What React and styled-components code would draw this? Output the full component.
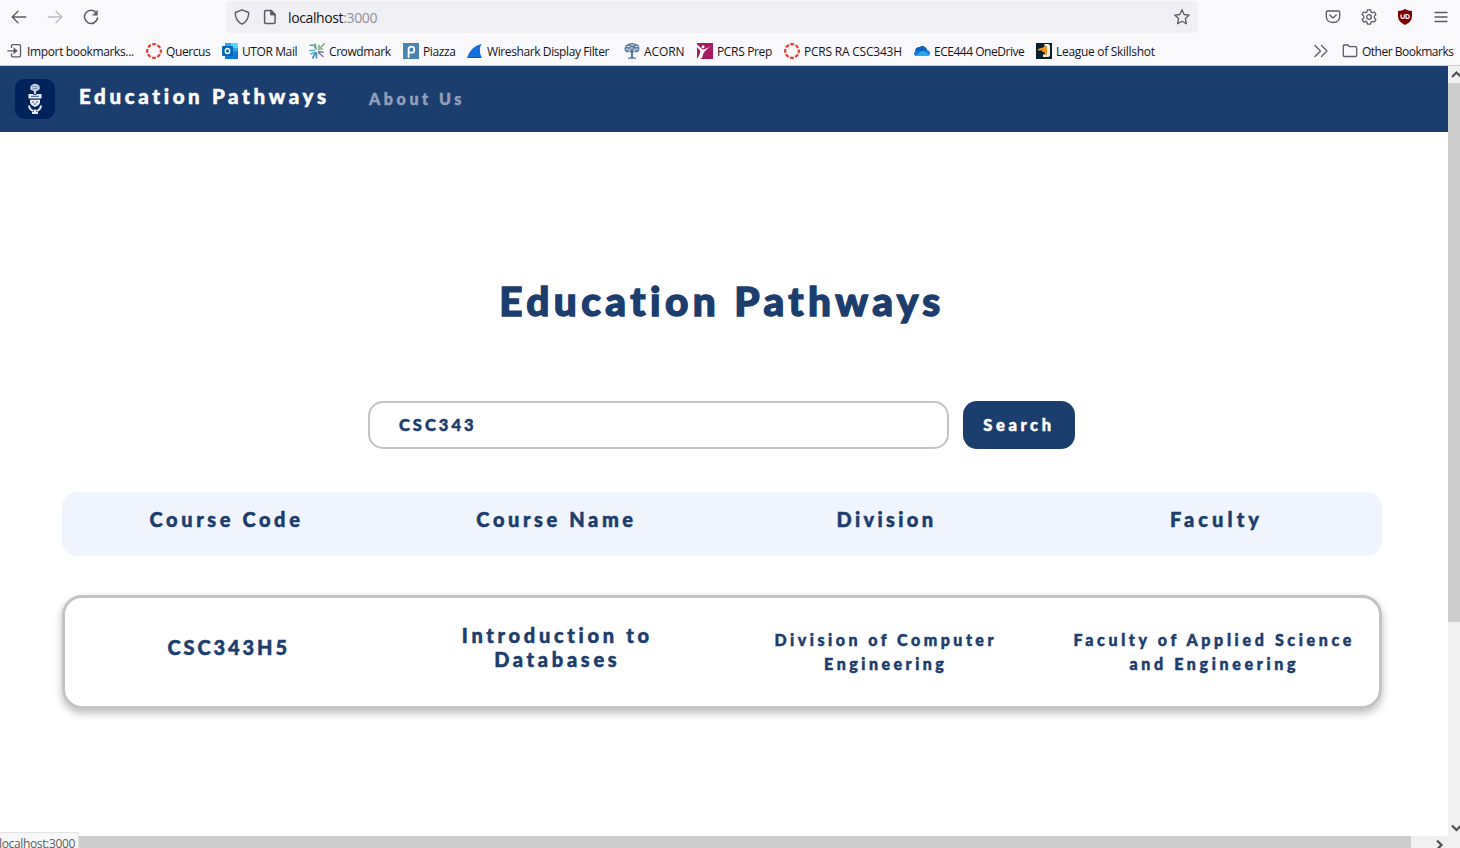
import React from "react";
import styled, { createGlobalStyle } from "styled-components";

const GlobalStyle = createGlobalStyle`
  * { box-sizing: border-box; }
  html, body { margin: 0; padding: 0; overflow: hidden; background: #fff; }
`;

const navy = "#1c3e6e";
const rounded = `"Lato", "Open Sans", sans-serif`;
const system = `"Open Sans", "Noto Sans", sans-serif`;

const Window = styled.div`
  width: 1460px;
  height: 848px;
  display: flex;
  flex-direction: column;
  overflow: hidden;
  position: relative;
`;

const Chrome = styled.header`
  height: 66px;
  flex: none;
  background: #f9f9fb;
  border-bottom: 1px solid #cccccf;
  font-family: ${system};
  color: #15141a;
`;

const Toolbar = styled.div`
  height: 34px;
  display: flex;
  align-items: center;
  padding: 0 11px 0 11px;
`;

const NavButtons = styled.div`
  display: flex;
  gap: 20px;
  width: 215px;
`;

const AddressBar = styled.div`
  width: 972px;
  height: 32px;
  border-radius: 4px;
  background: #f0f0f4;
  display: flex;
  align-items: center;
  padding: 0 8px;
  gap: 12px;
`;

const Address = styled.span`
  flex: 1;
  font-size: 14px;
  letter-spacing: -0.38px;
  margin: 1px 0 0 -2px;
  span { color: #8f8f9d; }
`;

const Tools = styled.div`
  flex: 1;
  display: flex;
  justify-content: flex-end;
  gap: 20px;
`;

const Bookmarks = styled.div`
  height: 31px;
  display: flex;
  align-items: center;
  padding: 3px 6px 0 7px;
`;

const Bookmark = styled.div`
  width: ${(p) => p.$width}px;
  flex: none;
  display: flex;
  align-items: center;
  gap: 4px;
  white-space: nowrap;
  font-size: 12px;
  letter-spacing: ${(p) => p.$spacing || -0.35}px;
  svg { flex: none; }
`;

const Overflow = styled.div`
  flex: 1;
  display: flex;
  justify-content: flex-end;
  padding-right: 13px;
`;

const Viewport = styled.div`
  flex: 1;
  min-height: 0;
  display: grid;
  grid-template-columns: 1448px 12px;
  grid-template-rows: 770px 12px;
`;

const Page = styled.main`
  overflow: hidden;
  background: #fff;
  font-family: ${rounded};
  font-weight: 900;
  color: ${navy};
  -webkit-text-stroke: 0.5px currentColor;
`;

const Navbar = styled.nav`
  height: 66px;
  background: ${navy};
  display: flex;
  align-items: center;
  padding-left: 15px;
`;

const Crest = styled.div`
  width: 40px;
  height: 40px;
  border-radius: 9px;
  background: #00235c;
  display: flex;
  align-items: center;
  justify-content: center;
`;

const Brand = styled.a`
  width: 290px;
  margin-left: 24px;
  padding-bottom: 6px;
  color: #fff;
  font-size: 20.5px;
  letter-spacing: 3.65px;
  white-space: nowrap;
`;

const NavLink = styled.a`
  color: #929fb6;
  font-size: 16px;
  letter-spacing: 3.6px;
  padding-bottom: 2px;
`;

const Title = styled.h1`
  margin: 139px 0 0;
  height: 60px;
  line-height: 60px;
  padding-right: 4px;
  text-align: center;
  font-size: 40.5px;
  font-weight: 900;
  letter-spacing: 4.45px;
  -webkit-text-stroke-width: 1.4px;
`;

const SearchForm = styled.div`
  display: flex;
  gap: 14px;
  margin: 70px 0 0 368px;
`;

const SearchInput = styled.input`
  width: 581px;
  height: 48px;
  border: 2px solid #c3c3c3;
  border-radius: 15px;
  padding: 0 29px;
  outline: 0;
  color: ${navy};
  font: 900 16.5px ${rounded};
  letter-spacing: 3px;
  -webkit-text-stroke: 0.5px currentColor;
`;

const SearchButton = styled.button`
  width: 112px;
  height: 48px;
  border: 0;
  border-radius: 14px;
  background: ${navy};
  color: #fff;
  font: 900 16.5px ${rounded};
  letter-spacing: 3.6px;
  padding: 0;
  -webkit-text-stroke: 0.5px currentColor;
`;

const TableHead = styled.div`
  width: 1320px;
  height: 64px;
  margin: 43px 0 0 62px;
  padding-top: 15px;
  border-radius: 15px;
  background: #f0f5fd;
  display: grid;
  grid-template-columns: repeat(4, 330px);
`;

const ResultCard = styled.div`
  width: 1320px;
  height: 114px;
  margin: 39px 0 0 62px;
  border: 3px solid #c3c3c3;
  border-radius: 20px;
  box-shadow: 0 4px 9px rgba(0, 0, 0, 0.27);
  display: grid;
  grid-template-columns: repeat(4, 1fr);
  align-items: center;
  padding-bottom: 8px;
`;

const Cell = styled.div`
  text-align: center;
  font-size: ${(p) => (p.$small ? 16 : 20)}px;
  line-height: 24px;
  letter-spacing: ${(p) => p.$spacing}px;
  padding: ${(p) => (p.$small ? "8px 1px 0 0" : "0 1px 2px 0")};
  white-space: pre;
`;

const VerticalBar = styled.div`
  background: #f0f0f0;
  display: flex;
  flex-direction: column;
  justify-content: space-between;
  overflow: hidden;
  svg { flex: none; }
`;

const VerticalThumb = styled.div`
  height: 539px;
  margin-bottom: auto;
  background: #cdcdcd;
`;

const HorizontalBar = styled.div`
  grid-column: 1 / 3;
  background: #f0f0f0;
  display: flex;
  justify-content: space-between;
  overflow: hidden;
`;

const HorizontalThumb = styled.div`
  width: 1411px;
  background: #cdcdcd;
`;

const Status = styled.div`
  position: absolute;
  left: -1px;
  bottom: 0;
  width: 80px;
  height: 16px;
  border: 1px solid #e3e3e3;
  border-bottom: 0;
  background: #f7f7f7;
  color: #5b5b60;
  font: 12px/21px ${system};
  letter-spacing: -0.35px;
  overflow: hidden;
  white-space: nowrap;
  text-indent: -1px;
`;

const Svg = ({ size = 16, children, color = "#5b5b66", width = 1.3 }) => (
  <svg width={size} height={size} viewBox="0 0 16 16" fill="none" stroke={color} strokeWidth={width} strokeLinecap="round" strokeLinejoin="round">
    {children}
  </svg>
);

const Ring = () => (
  <Svg color="#e03b2f" width={0}>
    <circle cx="8" cy="8" r="6.8" strokeWidth="2.2" strokeLinecap="butt" strokeDasharray="3.74 1.6" strokeDashoffset="1.87" />
  </Svg>
);

const icons = {
  import: <Svg><path d="M4.5 4.5V3q0-1.3 1.3-1.3h6.4q1.3 0 1.3 1.3v9.5q0 1.3-1.3 1.3H5.8q-1.3 0-1.3-1.3V11M.7 7.8h8" /><path d="M7 5l3.4 2.8L7 10.6z" fill="#5b5b66" strokeWidth=".6" /></Svg>,
  ring: <Ring />,
  outlook: <Svg width={0}><path d="M3 0h13v8H3z" fill="#28a8ea" /><path d="M9 0h7v5H9z" fill="#50d9ff" /><path d="M3 8h13v8H3z" fill="#1490df" /><path d="M3 8l7 4 6-4v8H3z" fill="#0f78d4" /><rect y="3" width="11" height="10" rx="1" fill="#0364b8" /><ellipse cx="5.5" cy="8" rx="2.2" ry="2.5" stroke="#fff" strokeWidth="1.4" /></Svg>,
  crowdmark: <Svg width={1.6}><path d="M9.5 6.5L15.5.7M10 6V2.4M10 6h3.5" stroke="#87b784" /><path d="M1 2.3h4L7 6M6 1l1 4" stroke="#65a59a" /><path d="M.8 7.5h5M5.5 9.5L2 11" stroke="#54b5c5" /><path d="M6.5 10l-2.8 5M7.5 10v5" stroke="#4d8dbd" /><path d="M9.5 9.5l4.5 4M9.8 8.5l4.2.8" stroke="#8b7196" /></Svg>,
  piazza: <Svg width={0}><path d="M0 0h16v16H0z" fill="#4985b1" /><path d="M5.6 14V6.7q0-3 2.9-3 2.8 0 2.8 3t-2.8 3q-1.4 0-2.9-1" stroke="#fff" strokeWidth="1.8" /></Svg>,
  shark: <Svg width={0}><path d="M0 15Q3 4 14.5.7 11 7 14.8 15z" fill="#146fe0" /><path d="M0 15q7-2 14.8 0z" fill="#1549a4" /></Svg>,
  acorn: (
    <Svg width={0}>
      <path d="M4 1q4-2 8 0 3 .6 3 3 1.500 3-1.500 5-2 1-3.500-.5L9 10v4l3 1v.7H4V15l3-1v-4L5.500 8.500Q4 10 2 9-.5 7 1 4 1 2 4 1z" fill="#58799f" />
      <path d="M3 3.500h2.500M7 2h3M11.500 3.500h2M2 6.200h3M6.500 5h2M10 6.200h4M4.500 8l2-1M11.500 8.300L9.500 7.500" stroke="#dfe8f2" strokeWidth="1" />
    </Svg>
  ),
  pcrs: <Svg width={0}><path d="M0 0h16v16H0z" fill="#a51c65" /><path d="M0 1.500l5.500 5q5-.5 10-5L8 8Q5.500 11 5 15l-2.500 1H0q3-4 3.500-8L0 4z" fill="#fff" /><circle cx="6" cy="3.800" r="1.500" fill="#fff" /></Svg>,
  onedrive: <Svg width={0}><path d="M1 9Q1.4 4 6 4q2-1.7 4.5-.3Q12.8 5 13 7q3 .6 3 3 0 3-3 3H3q-3 0-3-2.5Q0 9.4 1 9z" fill="#1678d2" /><path d="M2 12.5L9 7l6.4 4.7Q15 13 13 13H3z" fill="#28a8ea" /><path d="M1 7.5Q2 4 6 4q2-1.7 4.5-.3Q12.8 5 13 7L9 8z" fill="#0b60ba" /></Svg>,
  league: <Svg width={0}><path d="M0 0h16v16H0z" fill="#07222b" /><path d="M8.500 1h3.500q2 0 2 2v9q0 2-2 2H7v-2.500h4V3.500H8.500z" fill="#f5eedf" /><path d="M2 6l5-1.500 2-1.500 2 1v8H8.500V9H6.500L6 7.500H2z" fill="#f5941f" /></Svg>,
};

const bookmarks = [
  ["import", "Import bookmarks...", 139, -0.36],
  ["ring", "Quercus", 76, -0.4],
  ["outlook", "UTOR Mail", 87, -0.4],
  ["crowdmark", "Crowdmark", 94, -0.42],
  ["piazza", "Piazza", 64, -0.4],
  ["shark", "Wireshark Display Filter", 157, -0.4],
  ["acorn", "ACORN", 73, -0.1],
  ["pcrs", "PCRS Prep", 87, -0.35],
  ["ring", "PCRS RA CSC343H", 130, -0.22],
  ["onedrive", "ECE444 OneDrive", 122, -0.48],
  ["league", "League of Skillshot", 130, -0.3],
];

const Arrow = ({ d, width = 12, height = 17 }) => (
  <svg width={width} height={height} fill="none" stroke="#505050" strokeWidth="2.2"><path d={d} /></svg>
);

function BrowserChrome() {
  return (
    <Chrome>
      <Toolbar>
        <NavButtons>
          <Svg><path d="M1.2 8h13.6M7 2.2L1.2 8 7 13.8" /></Svg>
          <Svg color="#bcbcc4"><path d="M1.2 8h13.6M9 2.2L14.8 8 9 13.8" /></Svg>
          <Svg width={1.5}><path d="M13.6 4.2A6.6 6.6 0 1 0 14.6 9" /><path d="M14.4 1.5v4.7H9.8z" fill="#5b5b66" strokeWidth=".5" /></Svg>
        </NavButtons>
        <AddressBar>
          <Svg width={1.4}><path d="M8 .8l6.7 2.7c.1 5.3-1.5 9-6.7 11.7C2.8 12.500 1.200 8.800 1.300 3.500z" /></Svg>
          <Svg width={1.5}><path d="M3.800 1.500h5.300l4 4v7.700q0 1.200-1.200 1.200H3.800q-1.200 0-1.200-1.200V2.700q0-1.200 1.200-1.200zM9 1.700v3.900h4" /><path d="M9 1.500l4 4H9z" fill="#5b5b66" /></Svg>
          <Address>localhost<span>:3000</span></Address>
          <Svg><path d="M8 .8l2.100 4.700 5.100.6-3.800 3.500 1 5.200L8 12.300l-4.500 2.500 1-5.200L.7 6.100l5.100-.6z" /></Svg>
        </AddressBar>
        <Tools>
          <Svg><path d="M2.500 2h11q1.200 0 1.200 1.200V7q0 6.500-6.700 6.500T1.300 7V3.200Q1.300 2 2.500 2zM4.800 6L8 9l3.200-3" /></Svg>
          <Svg><circle cx="8" cy="8" r="2.300" /><path d="M6.500.8h3l.5 2.100 1.300.8 2.100-.7 1.500 2.600-1.600 1.500v1.800l1.600 1.500-1.500 2.600-2.100-.7-1.300.8-.5 2.100h-3L6 13.100l-1.300-.8-2.100.7-1.500-2.600 1.600-1.500V7.100L1.100 5.600 2.600 3l2.100.7L6 2.900z" /></Svg>
          <svg width="16" height="16" viewBox="0 0 16 16"><path d="M8 0Q11 2 15 2V7Q15 13 8 16Q1 13 1 7V2Q5 2 8 0Z" fill="#800000" /><path d="M4 5.500v2.300q0 1.600 1.700 1.600T7.400 7.800V5.500M9 5.500h1q2.200 0 2.200 2T10 9.400H9z" fill="none" stroke="#fff" strokeWidth="1.200" /></svg>
          <Svg><path d="M2 3.500h12M2 8h12M2 12.500h12" /></Svg>
        </Tools>
      </Toolbar>
      <Bookmarks>
        {bookmarks.map(([icon, label, width, spacing]) => (
          <Bookmark key={label} $width={width} $spacing={spacing}>{icons[icon]}{label}</Bookmark>
        ))}
        <Overflow><Svg><path d="M2 2.500l5.500 5.500L2 13.500M8.500 2.500L14 8l-5.500 5.500" /></Svg></Overflow>
        <Bookmark $width={112} $spacing={-0.5}>
          <Svg><path d="M2 2h4l1.500 1.700h6q1.200 0 1.200 1.200v7.400q0 1.200-1.200 1.200h-11q-1.200 0-1.200-1.200V3Q1.300 2 2 2z" /></Svg>Other Bookmarks
        </Bookmark>
      </Bookmarks>
    </Chrome>
  );
}

const CrestIcon = () => (
  <svg width="16" height="32" viewBox="0 0 16 32">
    <path d="M5.500 1.500q2.500-1.500 5 0 2.500.8 2.300 3.500-.3 2.700-3 2.800L9 9v2H7V9l-.8-1.200Q3.400 7.700 3.200 5 3 2.500 5.500 1.500z" fill="#c9d3e1" />
    <path d="M5 4q3-2 6 0M5.500 6q2.500-1.500 5 0" fill="none" stroke="#5d7397" strokeWidth=".8" />
    <path d="M1.500 11h4l2.500 1 2.500-1h4v4.500h-13zM3 16.800h10v2.700q-.5 2.500-5 4.500-4.500-2-5-4.500z" fill="#e9eef5" />
    <path d="M4 13.300h8M5 19h2M9 19h2M8 20v2" stroke="#37517d" strokeWidth="1" />
    <path d="M2 22.500q.5 4.500 4.500 5.500M14 22.500q-.5 4.500-4.500 5.500M5 30h6M8 26.500V30" fill="none" stroke="#e9eef5" strokeWidth="2" />
  </svg>
);

export default function App() {
  return (
    <Window>
      <GlobalStyle />
      <BrowserChrome />
      <Viewport>
        <Page>
          <Navbar>
            <Crest><CrestIcon /></Crest>
            <Brand>Education Pathways</Brand>
            <NavLink>About Us</NavLink>
          </Navbar>
          <Title>Education Pathways</Title>
          <SearchForm>
            <SearchInput defaultValue="CSC343" />
            <SearchButton>Search</SearchButton>
          </SearchForm>
          <TableHead>
            <Cell $spacing={3.6}>Course Code</Cell>
            <Cell $spacing={3.6}>Course Name</Cell>
            <Cell $spacing={3.35}>Division</Cell>
            <Cell $spacing={4.1}>Faculty</Cell>
          </TableHead>
          <ResultCard>
            <Cell $spacing={2.9}>CSC343H5</Cell>
            <Cell $spacing={3.7}>{"Introduction to\nDatabases"}</Cell>
            <Cell $small $spacing={3.5}>{"Division of Computer\nEngineering"}</Cell>
            <Cell $small $spacing={3.65}>{"Faculty of Applied Science\nand Engineering"}</Cell>
          </ResultCard>
        </Page>
        <VerticalBar>
          <Arrow d="M4 11l4.500-4.500L13 11" />
          <VerticalThumb />
          <Arrow d="M4 6.500L8.500 11 13 6.500" />
        </VerticalBar>
        <HorizontalBar>
          <HorizontalThumb />
          <Arrow width={29} height={12} d="M6 4.500L10.500 9 6 13.500" />
        </HorizontalBar>
      </Viewport>
      <Status>localhost:3000</Status>
    </Window>
  );
}
